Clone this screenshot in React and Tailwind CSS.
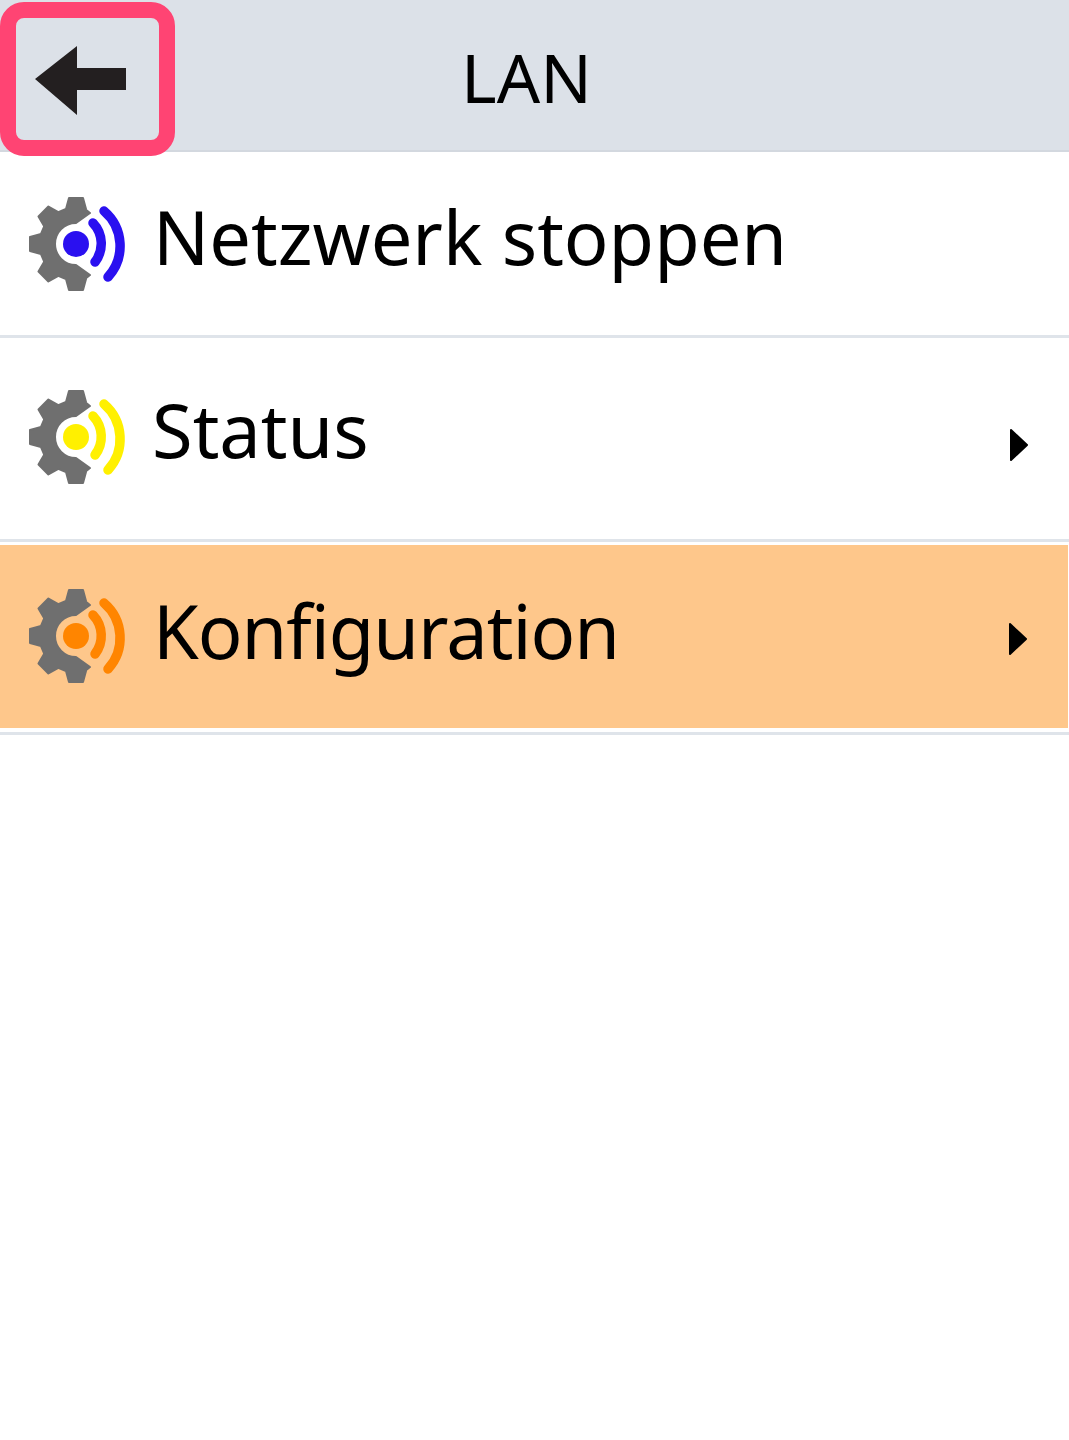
const tooth = (deg) => {
  const a = (deg * Math.PI) / 180;
  const ux = Math.cos(a);
  const uy = -Math.sin(a);
  const vx = -uy;
  const vy = ux;
  const pt = (r, w) => `${(60 + ux * r + vx * w).toFixed(1)} ${(59 + uy * r + vy * w).toFixed(1)}`;
  return `L${pt(35, 10)} L${pt(46, 7)} L${pt(46, -7)} L${pt(35, -10)}`;
};

const gearPath = `M74 28 L69 24 ${[90, 135, 180, 225, 270].map(tooth).join(' ')} L69 94 L74 90 L60 80 A21 21 0 0 1 60 38 Z`;

const GearIcon = ({ color, pad }) => (
  <span className={`shrink-0 ${pad}`}>
    <svg width="125" height="115" viewBox="0 0 125 115" className="block">
      <path d={gearPath} fill="#6f6f6f" stroke="#6f6f6f" strokeWidth="2" strokeLinejoin="round" />
      <circle cx="60" cy="59" r="13" fill={color} />
      <path d="M77 38 A30 30 0 0 1 79 77" fill="none" stroke={color} strokeWidth="9.5" strokeLinecap="round" />
      <path d="M88 26 A46 46 0 0 1 92 92" fill="none" stroke={color} strokeWidth="9.5" strokeLinecap="round" />
    </svg>
  </span>
);

const Chevron = () => (
  <svg width="20" height="34" viewBox="0 0 20 34" className="block">
    <path d="M2 2 L18 17 L2 32 Z" fill="#000" stroke="#000" strokeWidth="2" strokeLinejoin="round" />
  </svg>
);

const Row = ({ label, color, iconPad, textCls, chevPad, height, active, chevron }) => (
  <div className={`flex items-center pl-[16px] ${height} ${active ? 'bg-[#fec78b] mr-[1px]' : ''}`}>
    <GearIcon color={color} pad={iconPad} />
    <span className={`flex-1 text-[74px] leading-none text-black ${textCls}`}>{label}</span>
    {chevron && (
      <span className={`mr-[40px] ${chevPad}`}>
        <Chevron />
      </span>
    )}
  </div>
);

const App = () => {
  return (
    <div className="relative h-[1440px] w-[1069px] overflow-hidden bg-white font-['Noto_Sans',sans-serif]">
      <div className="flex h-[152px] items-center justify-center border-b-2 border-[#d3d8df] bg-[#dce1e8]">
        <span className="ml-[-16px] pt-[4px] text-[68px] leading-none text-black">LAN</span>
      </div>

      <div className="absolute left-0 top-[2px] flex h-[154px] w-[175px] items-center rounded-[24px] border-[16px] border-[#ff4473]">
        <svg width="120" height="100" viewBox="0 0 120 100" className="shrink-0">
          <path d="M19 50 L61 17 L61 39 L110 39 L110 61 L61 61 L61 86 Z" fill="#231f20" />
        </svg>
      </div>

      <Row label="Netzwerk stoppen" color="#2a10f0" height="h-[183px]" iconPad="pb-[2px]" textCls="ml-[12px] pb-[14px]" />
      <div className="h-[3px] bg-[#dfe4ea]" />
      <Row label="Status" color="#fff000" height="h-[201px]" iconPad="pb-[6px]" textCls="ml-[11px] pb-[18px]" chevPad="pt-[12px]" chevron />
      <div className="h-[3px] bg-[#dfe4ea]" />
      <div className="h-[3px]" />
      <Row label="Konfiguration" color="#ff8500" height="h-[183px]" active iconPad="pb-[5px]" textCls="ml-[12px] pb-[12px] tracking-[-1px]" chevPad="pt-[5px]" chevron />
      <div className="h-[4px]" />
      <div className="h-[3px] bg-[#dfe4ea]" />
    </div>
  );
};

export default App;
